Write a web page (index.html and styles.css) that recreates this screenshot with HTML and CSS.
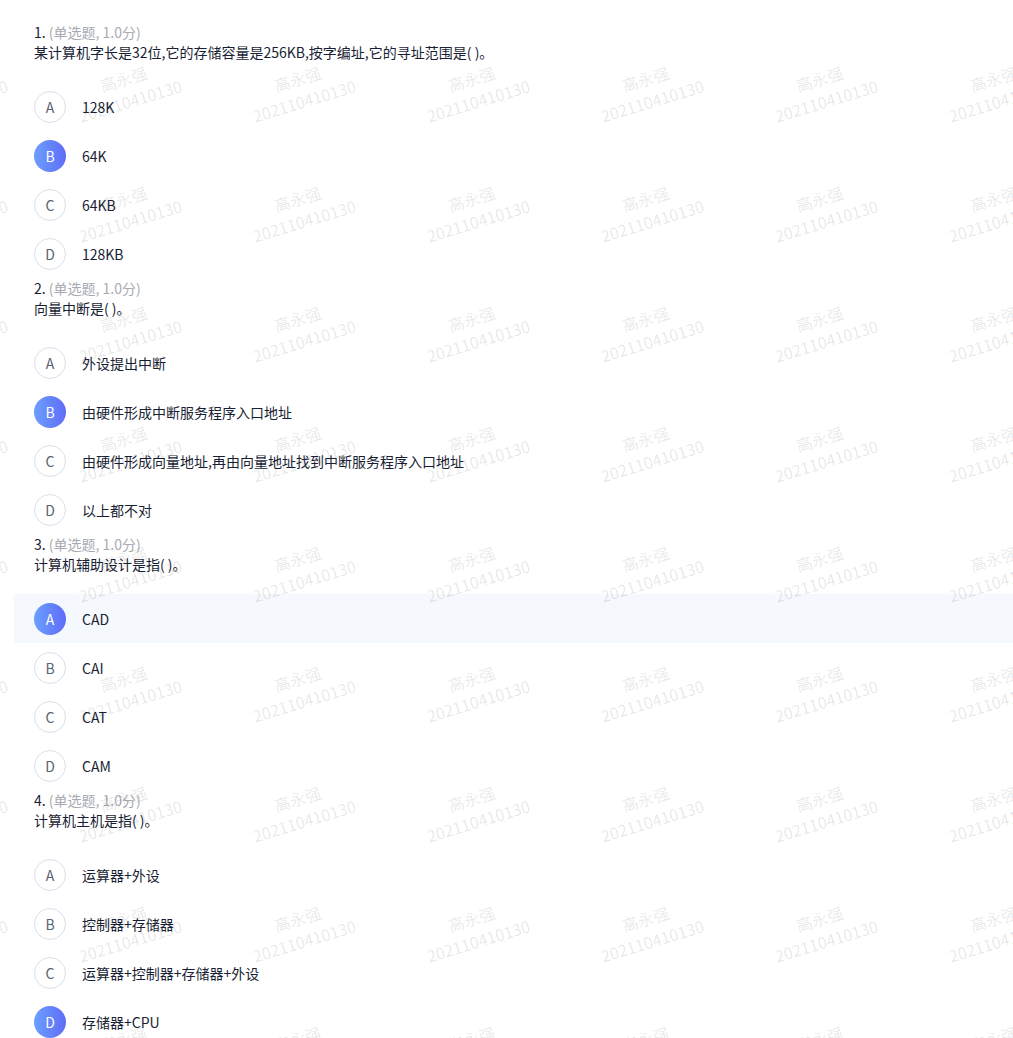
FILE: index.html
```html
<!DOCTYPE html>
<html lang="zh-CN">
<head>
<meta charset="utf-8">
<title>作业</title>
<link rel="stylesheet" href="styles.css">
</head>
<body>
<div class="paper">
  <section class="question">
    <h3 class="q-head"><span class="q-num">1.</span> <span class="q-type">(单选题, 1.0分)</span></h3>
    <div class="q-title">某计算机字长是32位,它的存储容量是256KB,按字编址,它的寻址范围是(&nbsp;)。</div>
    <ul class="options">
      <li class="option"><span class="letter">A</span><span class="opt-text">128K</span></li>
      <li class="option"><span class="letter selected">B</span><span class="opt-text">64K</span></li>
      <li class="option"><span class="letter">C</span><span class="opt-text">64KB</span></li>
      <li class="option"><span class="letter">D</span><span class="opt-text">128KB</span></li>
    </ul>
  </section>
  <section class="question">
    <h3 class="q-head"><span class="q-num">2.</span> <span class="q-type">(单选题, 1.0分)</span></h3>
    <div class="q-title">向量中断是(&nbsp;)。</div>
    <ul class="options">
      <li class="option"><span class="letter">A</span><span class="opt-text">外设提出中断</span></li>
      <li class="option"><span class="letter selected">B</span><span class="opt-text">由硬件形成中断服务程序入口地址</span></li>
      <li class="option"><span class="letter">C</span><span class="opt-text">由硬件形成向量地址,再由向量地址找到中断服务程序入口地址</span></li>
      <li class="option"><span class="letter">D</span><span class="opt-text">以上都不对</span></li>
    </ul>
  </section>
  <section class="question">
    <h3 class="q-head"><span class="q-num">3.</span> <span class="q-type">(单选题, 1.0分)</span></h3>
    <div class="q-title">计算机辅助设计是指(&nbsp;)。</div>
    <ul class="options">
      <li class="option hover"><span class="letter selected">A</span><span class="opt-text">CAD</span></li>
      <li class="option"><span class="letter">B</span><span class="opt-text">CAI</span></li>
      <li class="option"><span class="letter">C</span><span class="opt-text">CAT</span></li>
      <li class="option"><span class="letter">D</span><span class="opt-text">CAM</span></li>
    </ul>
  </section>
  <section class="question">
    <h3 class="q-head"><span class="q-num">4.</span> <span class="q-type">(单选题, 1.0分)</span></h3>
    <div class="q-title">计算机主机是指(&nbsp;)。</div>
    <ul class="options">
      <li class="option"><span class="letter">A</span><span class="opt-text">运算器+外设</span></li>
      <li class="option"><span class="letter">B</span><span class="opt-text">控制器+存储器</span></li>
      <li class="option"><span class="letter">C</span><span class="opt-text">运算器+控制器+存储器+外设</span></li>
      <li class="option"><span class="letter selected">D</span><span class="opt-text">存储器+CPU</span></li>
    </ul>
  </section>
</div>

<div class="watermark" aria-hidden="true">
  <div class="wm"><span>高永强</span><span>202110410130</span></div><div class="wm"><span>高永强</span><span>202110410130</span></div><div class="wm"><span>高永强</span><span>202110410130</span></div><div class="wm"><span>高永强</span><span>202110410130</span></div><div class="wm"><span>高永强</span><span>202110410130</span></div><div class="wm"><span>高永强</span><span>202110410130</span></div><div class="wm"><span>高永强</span><span>202110410130</span></div>
  <div class="wm"><span>高永强</span><span>202110410130</span></div><div class="wm"><span>高永强</span><span>202110410130</span></div><div class="wm"><span>高永强</span><span>202110410130</span></div><div class="wm"><span>高永强</span><span>202110410130</span></div><div class="wm"><span>高永强</span><span>202110410130</span></div><div class="wm"><span>高永强</span><span>202110410130</span></div><div class="wm"><span>高永强</span><span>202110410130</span></div>
  <div class="wm"><span>高永强</span><span>202110410130</span></div><div class="wm"><span>高永强</span><span>202110410130</span></div><div class="wm"><span>高永强</span><span>202110410130</span></div><div class="wm"><span>高永强</span><span>202110410130</span></div><div class="wm"><span>高永强</span><span>202110410130</span></div><div class="wm"><span>高永强</span><span>202110410130</span></div><div class="wm"><span>高永强</span><span>202110410130</span></div>
  <div class="wm"><span>高永强</span><span>202110410130</span></div><div class="wm"><span>高永强</span><span>202110410130</span></div><div class="wm"><span>高永强</span><span>202110410130</span></div><div class="wm"><span>高永强</span><span>202110410130</span></div><div class="wm"><span>高永强</span><span>202110410130</span></div><div class="wm"><span>高永强</span><span>202110410130</span></div><div class="wm"><span>高永强</span><span>202110410130</span></div>
  <div class="wm"><span>高永强</span><span>202110410130</span></div><div class="wm"><span>高永强</span><span>202110410130</span></div><div class="wm"><span>高永强</span><span>202110410130</span></div><div class="wm"><span>高永强</span><span>202110410130</span></div><div class="wm"><span>高永强</span><span>202110410130</span></div><div class="wm"><span>高永强</span><span>202110410130</span></div><div class="wm"><span>高永强</span><span>202110410130</span></div>
  <div class="wm"><span>高永强</span><span>202110410130</span></div><div class="wm"><span>高永强</span><span>202110410130</span></div><div class="wm"><span>高永强</span><span>202110410130</span></div><div class="wm"><span>高永强</span><span>202110410130</span></div><div class="wm"><span>高永强</span><span>202110410130</span></div><div class="wm"><span>高永强</span><span>202110410130</span></div><div class="wm"><span>高永强</span><span>202110410130</span></div>
  <div class="wm"><span>高永强</span><span>202110410130</span></div><div class="wm"><span>高永强</span><span>202110410130</span></div><div class="wm"><span>高永强</span><span>202110410130</span></div><div class="wm"><span>高永强</span><span>202110410130</span></div><div class="wm"><span>高永强</span><span>202110410130</span></div><div class="wm"><span>高永强</span><span>202110410130</span></div><div class="wm"><span>高永强</span><span>202110410130</span></div>
  <div class="wm"><span>高永强</span><span>202110410130</span></div><div class="wm"><span>高永强</span><span>202110410130</span></div><div class="wm"><span>高永强</span><span>202110410130</span></div><div class="wm"><span>高永强</span><span>202110410130</span></div><div class="wm"><span>高永强</span><span>202110410130</span></div><div class="wm"><span>高永强</span><span>202110410130</span></div><div class="wm"><span>高永强</span><span>202110410130</span></div>
  <div class="wm"><span>高永强</span><span>202110410130</span></div><div class="wm"><span>高永强</span><span>202110410130</span></div><div class="wm"><span>高永强</span><span>202110410130</span></div><div class="wm"><span>高永强</span><span>202110410130</span></div><div class="wm"><span>高永强</span><span>202110410130</span></div><div class="wm"><span>高永强</span><span>202110410130</span></div><div class="wm"><span>高永强</span><span>202110410130</span></div>
</div>
</body>
</html>
```

FILE: styles.css
```css
html, body {
  margin: 0;
  padding: 0;
  overflow: hidden;
  height: 100%;
  background: #ffffff;
}

body {
  font-family: "Microsoft YaHei", "Noto Sans CJK SC", "Noto Sans", sans-serif;
  font-size: 14px;
  color: #181e33;
  position: relative;
}

.paper {
  padding: 22px 0 0 14px;
}

.question {
  display: flex;
  flex-direction: column;
}

.q-head {
  margin: 0;
  padding-left: 20px;
  font-size: 14px;
  font-weight: normal;
  line-height: 20px;
  height: 20px;
}

.q-num {
  color: #181e33;
}

.q-type {
  color: #a8abb3;
}

.q-title {
  padding-left: 20px;
  line-height: 20px;
  height: 20px;
  margin-bottom: 20px;
}

.options {
  list-style: none;
  margin: 0;
  padding: 0;
}

.option {
  display: flex;
  align-items: center;
  height: 49px;
  padding-left: 20px;
}

.option.hover {
  background: #f5f8fc;
}

.letter {
  box-sizing: border-box;
  width: 32px;
  height: 32px;
  border-radius: 50%;
  border: 1px solid #d8e0ee;
  display: flex;
  align-items: center;
  justify-content: center;
  color: #5b6270;
  font-size: 14px;
  flex-shrink: 0;
  background: #fff;
}

.letter.selected {
  border: none;
  color: #ffffff;
  background: linear-gradient(90deg, #6b9ffe 0%, #5f6cf7 100%);
}

.opt-text {
  margin-left: 16px;
  line-height: 20px;
}

.watermark {
  position: absolute;
  top: 30px;
  left: -134px;
  width: 1218px;
  display: grid;
  grid-template-columns: repeat(7, 174px);
  grid-auto-rows: 120px;
  pointer-events: none;
  z-index: 5;
}

.wm {
  display: flex;
  flex-direction: column;
  align-items: center;
  justify-content: center;
  transform: rotate(-17deg);
  color: rgba(0, 0, 0, 0.1);
  font-size: 16px;
  line-height: 23px;
  white-space: nowrap;
}
```
